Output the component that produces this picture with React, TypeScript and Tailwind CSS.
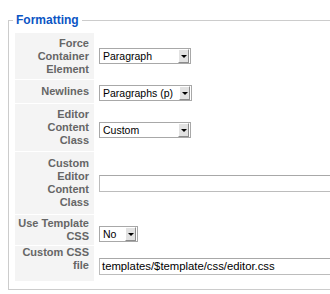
import React from 'react'

interface Param {
    lines: string[];
    height: string;
    valuePad: string;
    labelTop?: boolean;
    control: React.ReactNode;
}

const Arrow = () => (
    <div className="ml-auto mr-px flex h-[14px] w-[11px] items-center justify-center border-t border-l border-t-white border-l-white border-r border-b border-r-[#8c8c8c] border-b-[#8c8c8c] bg-[#e2e2e2]">
        <div className="h-0 w-0 border-x-[3px] border-t-[3px] border-x-transparent border-t-black" />
    </div>
)

const Select = ({ value, width }: { value: string; width: string }) => (
    <div className={`flex h-[16px] items-center border border-[#a8a8a8] bg-white ${width}`}>
        <span className="pl-[3px] text-[10.5px] leading-none text-black whitespace-nowrap">{value}</span>
        <Arrow />
    </div>
)

const TextInput = ({ value }: { value: string }) => (
    <div className="flex h-[17px] w-[260px] items-center border border-[#bcbcbc] border-t-[#a8a8a8] bg-white pl-[2px]">
        <span className="text-[11.3px] leading-none text-black whitespace-nowrap">{value}</span>
    </div>
)

const params: Param[] = [
    { lines: ['Force', 'Container', 'Element'], height: 'h-[46px]', valuePad: 'pt-[15px]', control: <Select value="Paragraph" width="w-[92px]" /> },
    { lines: ['Newlines'], height: 'h-[23px]', valuePad: 'pt-[5px]', control: <Select value="Paragraphs (p)" width="w-[93px]" /> },
    { lines: ['Editor', 'Content', 'Class'], height: 'h-[47px]', valuePad: 'pt-[18px]', control: <Select value="Custom" width="w-[92px]" /> },
    { lines: ['Custom', 'Editor', 'Content', 'Class'], height: 'h-[62px]', valuePad: 'pt-[23px]', control: <TextInput value="" /> },
    { lines: ['Use Template', 'CSS'], height: 'h-[30px]', valuePad: 'pt-[11px]', control: <Select value="No" width="w-[39px]" /> },
    { lines: ['Custom CSS', 'file'], height: 'h-[35px]', valuePad: 'pt-[12px]', labelTop: true, control: <TextInput value="templates/$template/css/editor.css" /> },
]

const App: React.FC = () => {
    return (
        <div className="h-[294px] w-[330px] overflow-hidden bg-white pt-[13px] font-['Liberation_Sans',Arial,sans-serif]">
            <fieldset className="ml-[8px] w-[340px] border border-[#cccccc] pt-[6px] pb-[8px] pl-[6px]">
                <legend className="-ml-[2px] px-[3px] text-[12px] leading-[14px] font-bold text-[#0b55c4]">Formatting</legend>
                <div className="flex flex-col gap-px">
                    {params.map((p, i) => (
                        <div key={i} className={`flex ${p.height}`}>
                            <div className={`flex w-[79px] flex-col ${p.labelTop ? 'justify-start' : 'justify-center'} bg-[#f4f4f4] pr-[5px] text-right text-[11px] leading-[13px] font-bold text-[#666666]`}>
                                {p.lines.map((line) => (
                                    <span key={line} className="whitespace-nowrap">{line}</span>
                                ))}
                            </div>
                            <div className={`ml-px flex-1 pl-[4px] ${p.valuePad}`}>
                                {p.control}
                            </div>
                        </div>
                    ))}
                </div>
            </fieldset>
        </div>
    )
}

export default App
